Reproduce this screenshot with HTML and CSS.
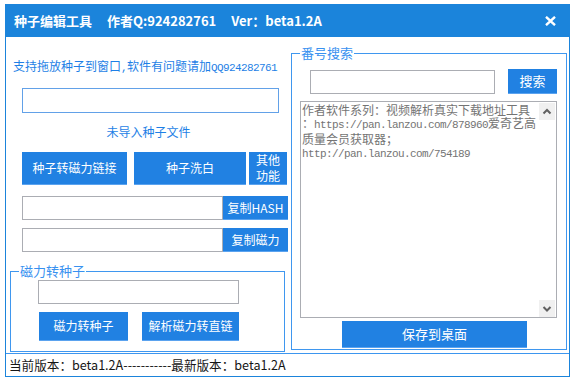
FILE: index.html
```html
<!DOCTYPE html>
<html lang="zh-CN">
<head>
<meta charset="utf-8">
<title>种子编辑工具</title>
<link rel="stylesheet" href="styles.css">
</head>
<body>
<div class="window">
  <div class="titlebar">
    <div class="title"><span>种子编辑工具</span><span>作者Q:924282761</span><span>Ver<span class="tc">：</span>beta1.2A</span></div>
    <svg class="close" width="11" height="10" viewBox="0 0 11 10"><path d="M1 0.8L10 9.2M10 0.8L1 9.2" stroke="#fff" stroke-width="2.4" fill="none"/></svg>
  </div>
  <div class="main">
    <div class="left">
      <div class="hint">支持拖放种子到窗口<span class="m">,</span>软件有问题请加<span class="m">QQ924282761</span></div>
      <div class="field file-field"></div>
      <div class="file-status">未导入种子文件</div>
      <div class="btn-row">
        <div class="btn b1">种子转磁力链接</div>
        <div class="btn b2">种子洗白</div>
        <div class="btn b3">其他<br>功能</div>
      </div>
      <div class="copy-row">
        <div class="field copy-field"></div>
        <div class="btn copy">复制HASH</div>
      </div>
      <div class="copy-row row2">
        <div class="field copy-field"></div>
        <div class="btn copy">复制磁力</div>
      </div>
      <fieldset class="group g-left">
        <legend>磁力转种子</legend>
        <div class="g-body">
          <div class="field magnet-field"></div>
          <div class="g-btns">
            <div class="btn m1">磁力转种子</div>
            <div class="btn m2">解析磁力转直链</div>
          </div>
        </div>
      </fieldset>
    </div>
    <fieldset class="group g-right">
      <legend>番号搜索</legend>
      <div class="search-row">
        <div class="field search-field"></div>
        <div class="btn search-btn">搜索</div>
      </div>
      <div class="textarea">
        <div class="ta-text">作者软件系列：视频解析真实下载地址工具<br>：<span class="m">https://pan.lanzou.com/878960</span>爱奇艺高<br>质量会员获取器；<br><span class="m">http://pan.lanzou.com/754189</span></div>
        <div class="scrollbar">
          <div class="arrow"><svg width="16" height="17" viewBox="0 0 16 17"><path d="M4.5 10.5L8 7L11.5 10.5" stroke="#606060" stroke-width="2" fill="none"/></svg></div>
          <div class="arrow"><svg width="16" height="17" viewBox="0 0 16 17"><path d="M4.5 7L8 10.5L11.5 7" stroke="#606060" stroke-width="2" fill="none"/></svg></div>
        </div>
      </div>
      <div class="btn save-btn">保存到桌面</div>
    </fieldset>
  </div>
  <div class="statusbar">当前版本<span class="tc">：</span>beta1.2A-----------最新版本<span class="tc">：</span>beta1.2A</div>
</div>
</body>
</html>
```

FILE: styles.css
```css
html, body {
  margin: 0;
  padding: 0;
  background: #ffffff;
}

body {
  font-family: "Noto Sans CJK SC", "Liberation Sans", sans-serif;
}

.tc {
  font-family: "Noto Sans CJK TC", "Noto Sans CJK SC", sans-serif;
}

.window {
  margin: 4px 0 0 5px;
  width: 565px;
  height: 373px;
  box-sizing: border-box;
  border: 1px solid #1b84db;
  border-top: 0;
  display: flex;
  flex-direction: column;
}

.titlebar {
  flex: 0 0 33px;
  height: 33px;
  background: #1b84db;
  color: #ffffff;
  display: flex;
  align-items: center;
  justify-content: space-between;
  padding: 0 13px 0 8px;
  font-size: 13px;
  font-weight: bold;
  line-height: 16px;
  white-space: nowrap;
}

.title > span {
  margin-right: 15px;
}

.close {
  display: block;
}

.main {
  flex: 0 0 316px;
  height: 316px;
  display: flex;
}

.left {
  width: 285px;
  flex: 0 0 285px;
  display: flex;
  flex-direction: column;
}

.m {
  font-family: "Liberation Mono", monospace;
  font-size: 11px;
  letter-spacing: -0.6px;
}

.hint {
  margin: 21px 0 0 7px;
  font-size: 12px;
  line-height: 16px;
  color: #1e7fe6;
  white-space: nowrap;
}

.field {
  box-sizing: border-box;
  border: 1px solid #abadb3;
  background: #ffffff;
  height: 24px;
}

.file-field {
  margin: 12px 0 0 16px;
  width: 257px;
  height: 25px;
  border-color: #62a1e8;
}

.file-status {
  margin-top: 11px;
  font-size: 12px;
  line-height: 16px;
  color: #1e7fe6;
  text-align: center;
}

.btn {
  box-sizing: border-box;
  background: #2181e2;
  color: #ffffff;
  font-size: 12px;
  line-height: 16px;
  display: flex;
  align-items: center;
  justify-content: center;
  text-align: center;
  white-space: nowrap;
  border-bottom: 1px solid #5ba3ef;
}

.btn-row {
  margin: 12px 0 0 16px;
  display: flex;
  height: 33px;
}

.b1 { width: 105px; }
.b2 { width: 112px; margin-left: 7px; }
.b3 { width: 38px; margin-left: 3px; }

.copy-row {
  margin: 11px 0 0 16px;
  display: flex;
  height: 24px;
}

.copy-row.row2 {
  margin-top: 8px;
}

.copy-field {
  width: 201px;
}

.copy {
  width: 65px;
  height: 24px;
}

.group {
  margin: 0;
  border: 1px solid #3f97ef;
  min-width: 0;
  box-sizing: border-box;
}

.group legend {
  padding: 0 1px;
  font-size: 13px;
  line-height: 14px;
  color: #3891f0;
}

.g-left {
  margin: 12px 0 0 4px;
  width: 275px;
  height: 88px;
  padding: 2px 0 0 8px;
}

.g-body {
  margin-left: 19px;
}

.magnet-field {
  width: 201px;
}

.g-btns {
  display: flex;
  margin: 8px 0 0 1px;
  height: 29px;
}

.m1 { width: 89px; }
.m2 { width: 97px; margin-left: 14px; }

.g-right {
  margin: 9px 0 0 0;
  width: 276px;
  flex: 0 0 276px;
  height: 304px;
  padding: 10px 9px 0 8px;
}

.search-row {
  display: flex;
  align-items: flex-end;
  margin-left: 10px;
  height: 24px;
}

.search-field {
  width: 185px;
}

.search-btn {
  width: 49px;
  height: 25px;
  margin-left: 13px;
  font-size: 13px;
}

.textarea {
  margin-top: 7px;
  width: 257px;
  height: 217px;
  box-sizing: border-box;
  border: 1px solid #abadb3;
  display: flex;
}

.ta-text {
  flex: 1;
  padding: 1px 0 0 1px;
  font-size: 12px;
  line-height: 13px;
  color: #747474;
  white-space: nowrap;
  overflow: hidden;
}

.scrollbar {
  width: 16px;
  padding: 1px 1px 0 0;
  display: flex;
  flex-direction: column;
  justify-content: space-between;
}

.arrow {
  width: 16px;
  height: 17px;
  background: #f0f0f0;
}

.arrow svg {
  display: block;
}

.save-btn {
  margin: 3px 0 0 42px;
  width: 185px;
  height: 27px;
  font-size: 13px;
}

.statusbar {
  flex: 0 0 22px;
  height: 22px;
  border-top: 1px solid #3d96ef;
  padding-left: 3px;
  font-size: 12.6px;
  line-height: 22px;
  color: #151515;
  white-space: nowrap;
}
```
